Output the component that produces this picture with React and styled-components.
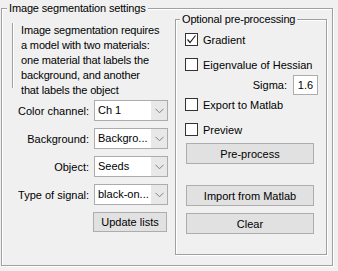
import React from "react";
import styled, { createGlobalStyle } from "styled-components";

const GlobalStyle = createGlobalStyle`
  html, body {
    margin: 0;
    padding: 0;
    background: #f0f0f0;
  }
  body {
    font-family: "Liberation Sans", Arial, sans-serif;
    font-size: 11px;
    color: #000;
  }
`;

const Window = styled.div`
  width: 338px;
  height: 271px;
  background: #f0f0f0;
  overflow: hidden;
  padding: 8px 0 0 1px;
  box-sizing: border-box;
`;

const Group = styled.div`
  position: relative;
  box-sizing: border-box;
  width: ${(p) => p.$w}px;
  height: ${(p) => p.$h}px;
  border: 1px solid #a0a0a0;
  box-shadow: inset 1px 1px 0 #fff, 1px 1px 0 #fff;
`;

const Legend = styled.span`
  position: absolute;
  top: -8px;
  left: ${(p) => p.$left}px;
  padding: 0 2px;
  background: #f0f0f0;
  font-size: 11px;
  letter-spacing: -0.15px;
  line-height: 14px;
  white-space: nowrap;
`;

const Body = styled.div`
  display: flex;
  padding-top: 10px;
`;

const LeftColumn = styled.div`
  width: 173px;
  display: flex;
  flex-direction: column;
`;

const Description = styled.div`
  margin: 4px 0 0 10px;
  height: 65px;
  border-left: 1px solid #a0a0a0;
  box-shadow: inset 1px 0 0 #fff;
  padding-left: 8px;
  font-size: 11px;
  letter-spacing: -0.15px;
  line-height: 15px;
  white-space: nowrap;
`;

const Fields = styled.div`
  display: flex;
  flex-direction: column;
  gap: 7px;
  margin-top: 12px;
`;

const FieldRow = styled.div`
  display: flex;
  align-items: center;
  height: 21px;
`;

const Label = styled.span`
  width: 87px;
  text-align: right;
  white-space: nowrap;
  margin-right: 5px;
`;

const Select = styled.div`
  box-sizing: border-box;
  width: 74px;
  height: 21px;
  display: flex;
  background: #fff;
  border: 1px solid #acacac;
`;

const SelectValue = styled.span`
  flex: 1;
  padding-left: 3px;
  line-height: 19px;
  white-space: nowrap;
  overflow: hidden;
`;

const SelectArrow = styled.span`
  width: 16px;
  display: flex;
  align-items: center;
  justify-content: center;
  background: #e8e8e8;
`;

const Button = styled.div`
  box-sizing: border-box;
  width: ${(p) => p.$w}px;
  height: ${(p) => p.$h || 21}px;
  margin-top: ${(p) => p.$mt || 0}px;
  margin-left: ${(p) => p.$ml || 0}px;
  background: #e1e1e1;
  border: 1px solid #adadad;
  display: flex;
  align-items: center;
  justify-content: center;
  white-space: nowrap;
`;

const RightContent = styled.div`
  display: flex;
  flex-direction: column;
  padding-left: 9px;
`;

const Check = styled.div`
  display: flex;
  align-items: center;
  height: 13px;
  margin-top: ${(p) => p.$mt}px;
`;

const Box = styled.span`
  box-sizing: border-box;
  width: 13px;
  height: 13px;
  background: #fff;
  border: 1px solid #333;
  margin-right: 5px;
  display: flex;
  align-items: center;
  justify-content: center;
`;

const SigmaRow = styled.div`
  display: flex;
  align-items: center;
  justify-content: flex-end;
  height: 20px;
  margin-top: 4px;
  padding-right: 8px;
`;

const SigmaInput = styled.span`
  box-sizing: border-box;
  width: 25px;
  height: 20px;
  margin-left: 6px;
  background: #fff;
  border: 1px solid #acacac;
  line-height: 18px;
  text-align: center;
`;

const Chevron = () => (
  <svg width="9" height="6" viewBox="0 0 9 6">
    <path d="M0.5 0.8 L4.5 4.8 L8.5 0.8" fill="none" stroke="#808080" strokeWidth="1" />
  </svg>
);

const Tick = () => (
  <svg width="11" height="11" viewBox="0 0 11 11">
    <path d="M1.5 5.5 L4 8.5 L9.5 1.5" fill="none" stroke="#222" strokeWidth="1.2" />
  </svg>
);

const Dropdown = ({ label, value }) => (
  <FieldRow>
    <Label>{label}</Label>
    <Select>
      <SelectValue>{value}</SelectValue>
      <SelectArrow>
        <Chevron />
      </SelectArrow>
    </Select>
  </FieldRow>
);

const CheckItem = ({ label, checked, mt }) => (
  <Check $mt={mt}>
    <Box>{checked && <Tick />}</Box>
    <span>{label}</span>
  </Check>
);

export default function App() {
  return (
    <Window>
      <GlobalStyle />
      <Group $w={332} $h={258}>
        <Legend $left={5}>Image segmentation settings</Legend>
        <Body>
          <LeftColumn>
            <Description>
              Image segmentation requires
              <br />
              a model with two materials:
              <br />
              one material that labels the
              <br />
              background, and another
              <br />
              that labels the object
            </Description>
            <Fields>
              <Dropdown label="Color channel:" value="Ch 1" />
              <Dropdown label="Background:" value="Backgro..." />
              <Dropdown label="Object:" value="Seeds" />
              <Dropdown label="Type of signal:" value="black-on..." />
            </Fields>
            <Button $w={74} $h={20} $mt={7} $ml={91}>
              Update lists
            </Button>
          </LeftColumn>
          <Group $w={152} $h={236}>
            <Legend $left={4}>Optional pre-processing</Legend>
            <RightContent>
              <CheckItem label="Gradient" checked mt={13} />
              <CheckItem label="Eigenvalue of Hessian" mt={12} />
              <SigmaRow>
                Sigma:
                <SigmaInput>1.6</SigmaInput>
              </SigmaRow>
              <CheckItem label="Export to Matlab" mt={3} />
              <CheckItem label="Preview" mt={12} />
              <Button $w={128} $mt={7} $ml={1}>
                Pre-process
              </Button>
              <Button $w={128} $mt={21} $ml={1}>
                Import from Matlab
              </Button>
              <Button $w={128} $mt={7} $ml={1}>
                Clear
              </Button>
            </RightContent>
          </Group>
        </Body>
      </Group>
    </Window>
  );
}
